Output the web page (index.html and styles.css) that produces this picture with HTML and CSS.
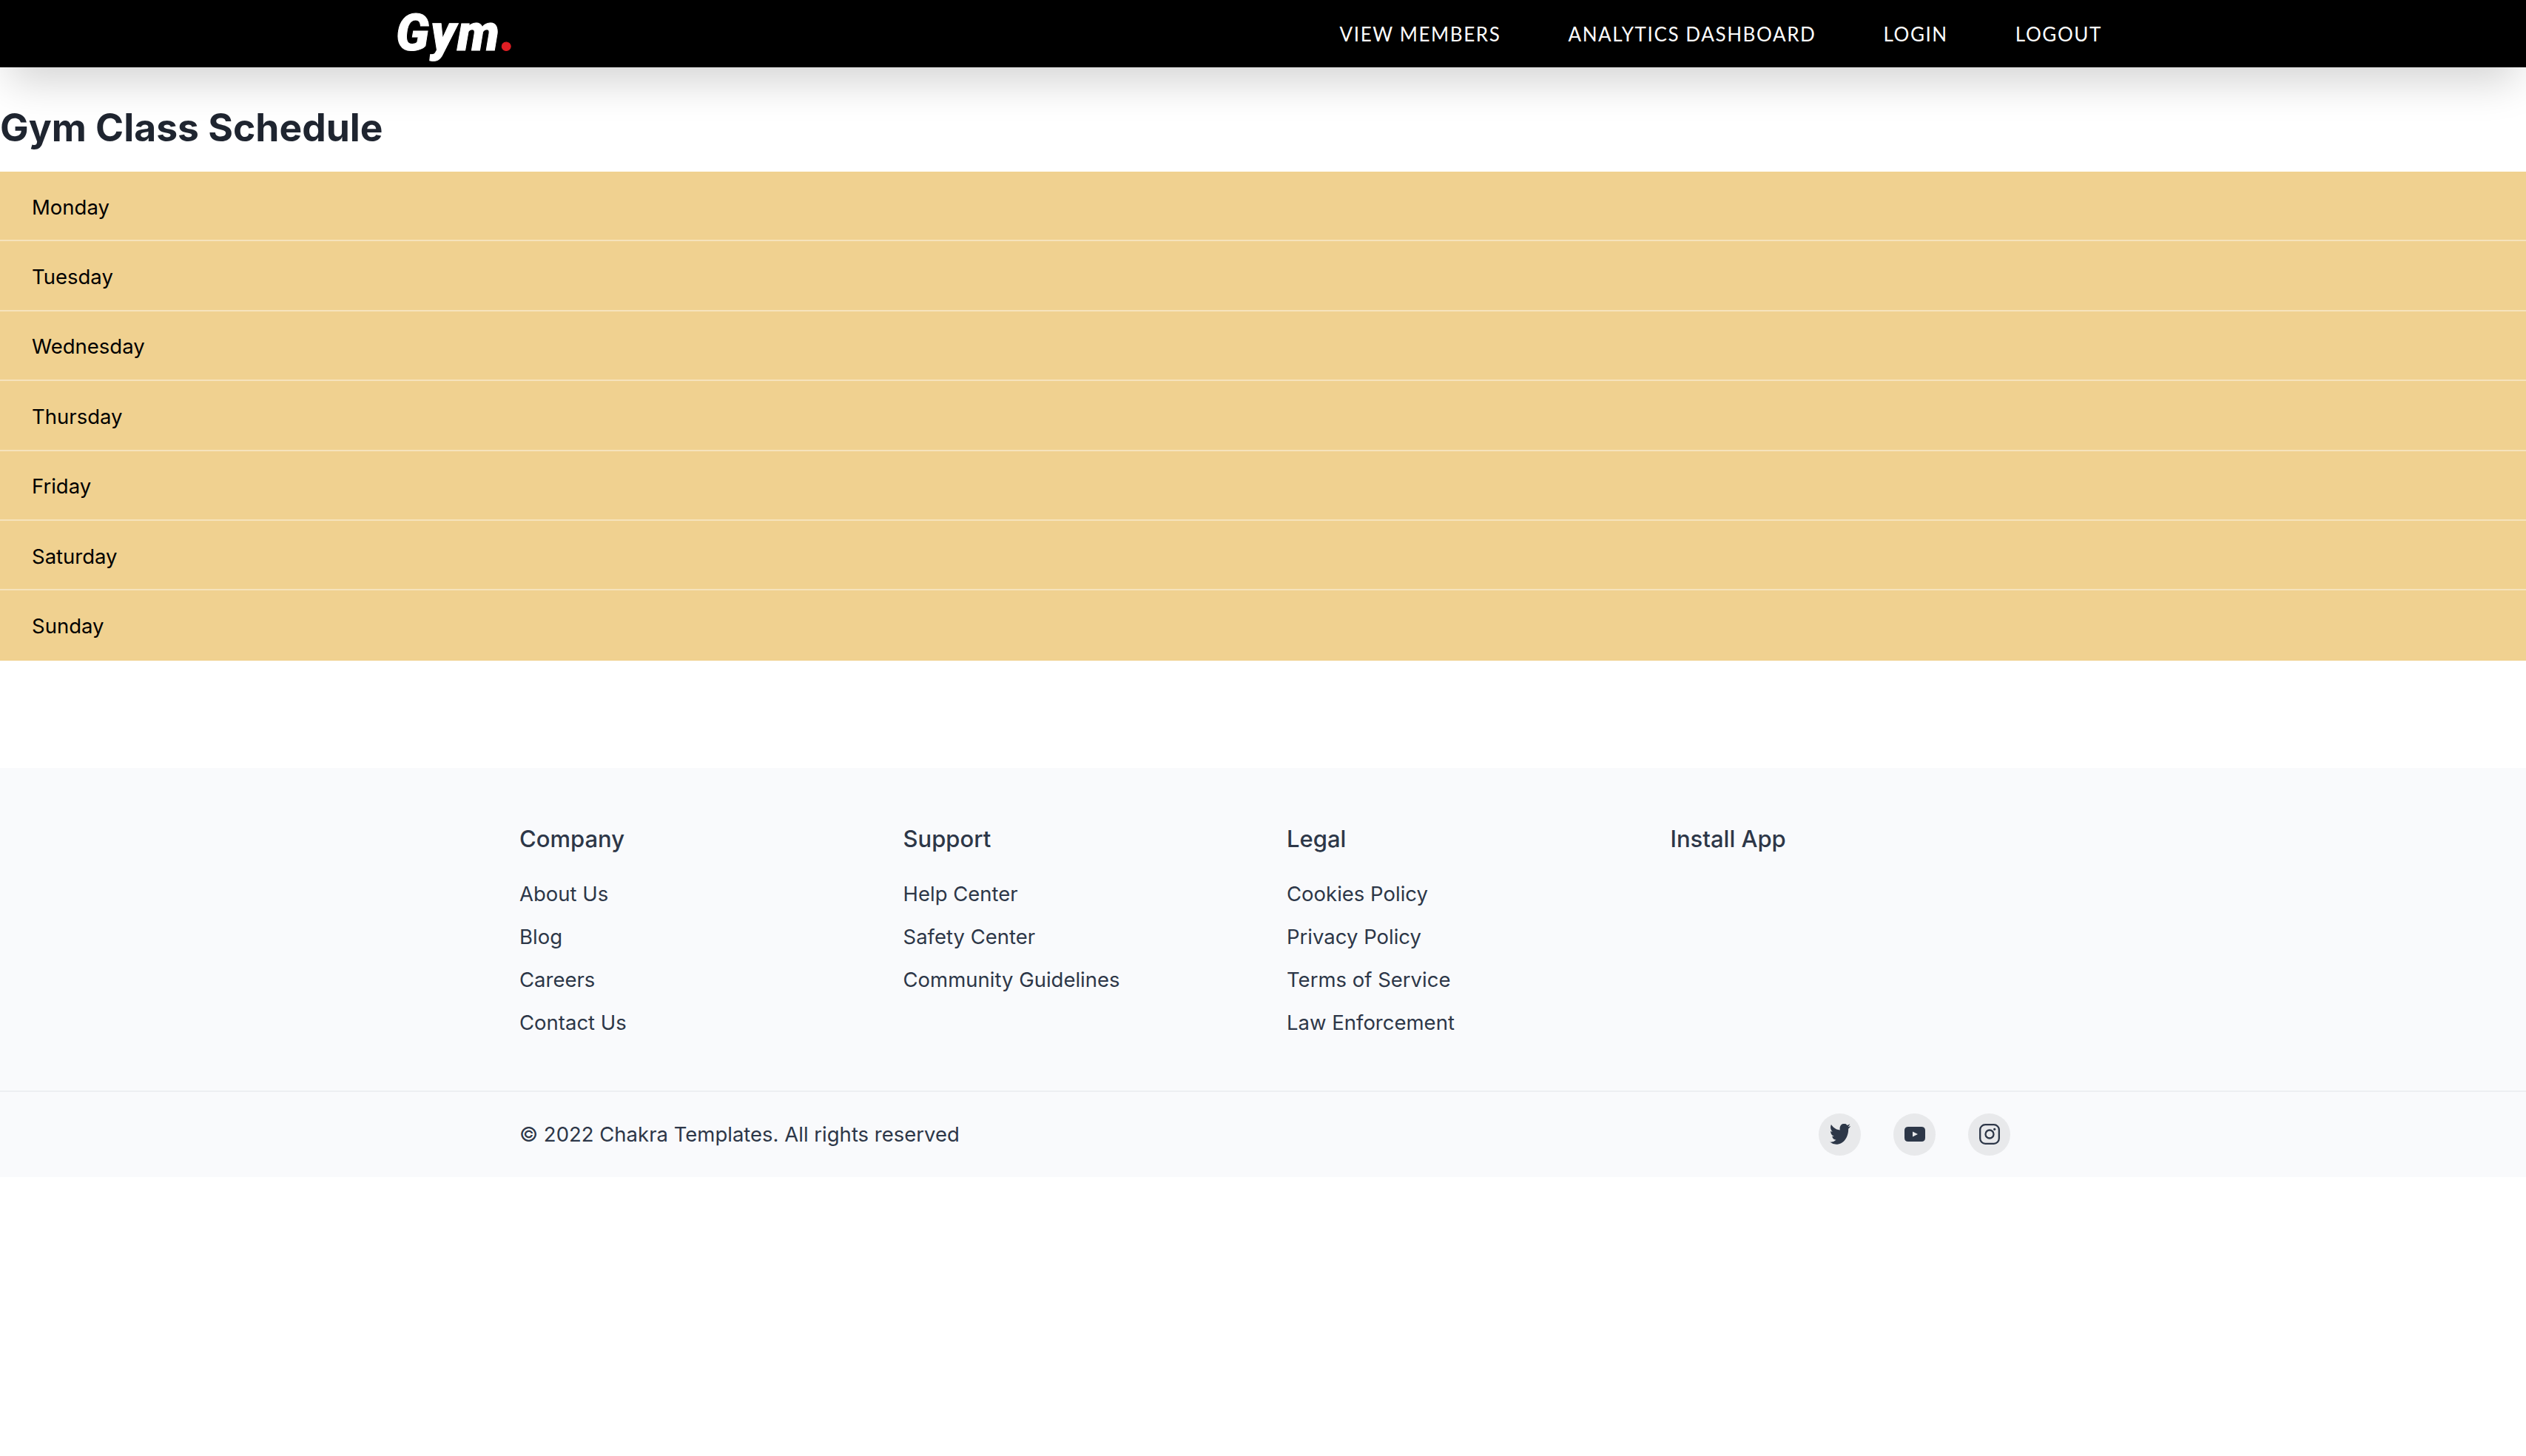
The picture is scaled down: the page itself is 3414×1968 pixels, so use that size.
FILE: index.html
```html
<!DOCTYPE html>
<html lang="en">

<head>
  <meta charset="UTF-8">
  <title>Gym Class Schedule</title>
  <link rel="stylesheet" href="styles.css">
</head>

<body>
  <nav class="topbar">
    <a class="logo">Gym<span class="logo-dot">.</span></a>
    <div class="nav-links">
      <a>View Members</a>
      <a>Analytics Dashboard</a>
      <a>Login</a>
      <a>Logout</a>
    </div>
  </nav>

  <main>
    <h1 class="page-title">Gym Class Schedule</h1>
    <ul class="days">
      <li>Monday</li>
      <li>Tuesday</li>
      <li>Wednesday</li>
      <li>Thursday</li>
      <li>Friday</li>
      <li>Saturday</li>
      <li>Sunday</li>
    </ul>
  </main>

  <footer class="footer">
    <div class="footer-cols">
      <div class="footer-col">
        <h2>Company</h2>
        <a>About Us</a>
        <a>Blog</a>
        <a>Careers</a>
        <a>Contact Us</a>
      </div>
      <div class="footer-col">
        <h2>Support</h2>
        <a>Help Center</a>
        <a>Safety Center</a>
        <a>Community Guidelines</a>
      </div>
      <div class="footer-col">
        <h2>Legal</h2>
        <a>Cookies Policy</a>
        <a>Privacy Policy</a>
        <a>Terms of Service</a>
        <a>Law Enforcement</a>
      </div>
      <div class="footer-col">
        <h2>Install App</h2>
      </div>
    </div>
    <div class="footer-bottom">
      <p>© 2022 Chakra Templates. All rights reserved</p>
      <div class="socials">
        <a class="social">
          <svg viewBox="0 2.4 24 19.5" preserveAspectRatio="none"><path d="M23.95 4.57a10 10 0 0 1-2.82.77 4.96 4.96 0 0 0 2.16-2.72 9.9 9.9 0 0 1-3.12 1.18 4.92 4.92 0 0 0-8.38 4.48C7.69 8.1 4.07 6.13 1.64 3.16a4.82 4.82 0 0 0-.67 2.48c0 1.71.87 3.21 2.19 4.1a4.9 4.9 0 0 1-2.23-.62v.06a4.92 4.92 0 0 0 3.95 4.83 5 5 0 0 1-2.21.08 4.94 4.94 0 0 0 4.6 3.42A9.87 9.87 0 0 1 0 19.54a14 14 0 0 0 7.56 2.21c9.05 0 14-7.5 14-13.98 0-.21 0-.42-.02-.63a9.94 9.94 0 0 0 2.41-2.55z"/></svg>
        </a>
        <a class="social">
          <svg viewBox="0 0 28 28"><path fill-rule="evenodd" d="M5 4h18c3.2 0 5 1.8 5 5v10c0 3.2-1.8 5-5 5H5c-3.2 0-5-1.800-5-5V9c0-3.200 1.800-5 5-5zM11 10.500v7l7-3.500z"/></svg>
        </a>
        <a class="social">
          <svg class="icon-line" viewBox="0 0 28 28"><rect x="1.200" y="1.200" width="25.600" height="25.600" rx="7"/><circle cx="14" cy="14" r="5.500"/><circle class="icon-dot" cx="20.700" cy="7.300" r="1.600"/></svg>
        </a>
      </div>
    </div>
  </footer>
</body>

</html>
```

FILE: styles.css
```css
* {
  box-sizing: border-box;
}

body {
  margin: 0;
  background: #fff;
  font-family: Inter, "Liberation Sans", sans-serif;
  color: #2d3748;
}

a {
  color: inherit;
  text-decoration: none;
}

/* Top bar */
.topbar {
  position: relative;
  height: 91px;
  padding: 0 573px 0 535px;
  display: flex;
  align-items: center;
  justify-content: space-between;
  background: #000;
  box-shadow: 0 30px 56px -12px rgba(0, 0, 0, 0.18);
}

.logo {
  color: #fff;
  font-family: Roboto, sans-serif;
  font-size: 68px;
  font-weight: 900;
  font-style: italic;
  line-height: 91px;
  letter-spacing: 2px;
  -webkit-text-stroke: 1px #fff;
}

.logo-dot {
  color: #e01e24;
  -webkit-text-stroke-color: #e01e24;
}

.nav-links {
  display: flex;
  gap: 91px;
  font-family: Lato, sans-serif;
  font-size: 26px;
  letter-spacing: 1.6px;
  text-transform: uppercase;
  color: #fff;
}

/* Schedule */
.page-title {
  margin: 0;
  height: 141px;
  padding-top: 20px;
  display: flex;
  align-items: center;
  font-size: 51.6px;
  font-weight: 700;
  color: #1f2530;
}

.days {
  margin: 0;
  padding: 0;
  list-style: none;
}

.days li {
  height: 94.4px;
  padding: 3px 0 0 43px;
  display: flex;
  align-items: center;
  background: #f0d190;
  border-bottom: 2px solid #f6e3bc;
  font-size: 27.5px;
  color: #000;
}

.days li:last-child {
  border-bottom-color: #f0d190;
}

/* Footer */
.footer {
  margin-top: 145px;
  background: #f9fafc;
}

.footer-cols {
  height: 438px;
  padding: 73px 0 0 702px;
  display: flex;
  border-bottom: 2px solid #edeff2;
}

.footer-col {
  width: 518.5px;
  display: flex;
  flex-direction: column;
  gap: 25px;
  font-size: 27.5px;
  line-height: 33px;
}

.footer-col h2 {
  margin: 0 0 10px;
  font-size: 31px;
  line-height: 46px;
  font-weight: 500;
}

.footer-bottom {
  height: 115px;
  padding: 0 697px 0 702px;
  display: flex;
  align-items: center;
  justify-content: space-between;
  font-size: 27.5px;
}

.footer-bottom p {
  margin: 0;
}

.socials {
  display: flex;
  gap: 44px;
}

.social {
  width: 57px;
  height: 57px;
  display: flex;
  align-items: center;
  justify-content: center;
  border-radius: 50%;
  background: #e8e9eb;
}

.social svg {
  width: 28px;
  height: 28px;
  fill: currentColor;
}

.social svg.icon-line {
  fill: none;
  stroke: currentColor;
  stroke-width: 2.300px;
}

.social svg .icon-dot {
  fill: currentColor;
  stroke: none;
}
```
